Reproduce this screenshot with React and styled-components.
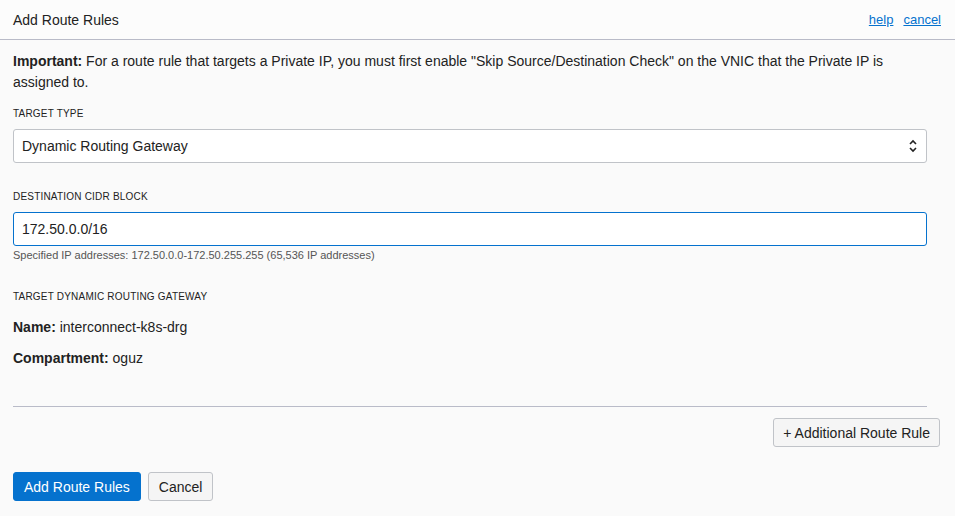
import styled, { createGlobalStyle } from "styled-components";

const GlobalStyle = createGlobalStyle`
  html, body {
    margin: 0;
    padding: 0;
    background: #fafafa;
  }
  body {
    font-family: "Liberation Sans", Arial, sans-serif;
    color: #161513;
  }
`;

const Panel = styled.div`
  width: 955px;
  height: 516px;
  display: flex;
  flex-direction: column;
  background: #fafafa;
`;

const Header = styled.div`
  height: 39px;
  display: flex;
  align-items: center;
  justify-content: space-between;
  padding: 0 14px 0 13px;
  border-bottom: 1px solid #b9bbc8;
  background: #fcfcfc;
`;

const Title = styled.h1`
  margin: 0;
  font-size: 14px;
  font-weight: 400;
  color: #222;
`;

const Links = styled.div`
  display: flex;
  gap: 10px;
`;

const Link = styled.a`
  font-size: 13px;
  color: #0572ce;
  text-decoration: underline;
  cursor: pointer;
`;

const Body = styled.div`
  padding: 11px 28px 0 13px;
  display: flex;
  flex-direction: column;
`;

const Notice = styled.p`
  margin: 0;
  font-size: 14px;
  line-height: 21px;
  color: #222;
  padding-right: 20px;
`;

const Label = styled.div`
  font-size: 10px;
  letter-spacing: 0.2px;
  text-transform: uppercase;
  color: #222;
  margin-top: ${(p) => p.$top}px;
  margin-bottom: ${(p) => p.$bottom}px;
`;

const Field = styled.div`
  height: 34px;
  box-sizing: border-box;
  border: 1px solid ${(p) => (p.$focus ? "#0572ce" : "#c0c3c8")};
  border-radius: 3px;
  background: #fff;
  display: flex;
  align-items: center;
  justify-content: space-between;
  padding: 0 8px 0 8px;
  font-size: 14px;
  color: #222;
`;

const Help = styled.div`
  font-size: 11px;
  color: #555;
  margin-top: 3px;
`;

const Detail = styled.div`
  font-size: 14px;
  color: #222;
  margin-top: ${(p) => p.$top}px;
  b {
    font-weight: 700;
  }
`;

const Divider = styled.hr`
  border: none;
  border-top: 1px solid #b9bbc8;
  margin: 40px 0 0 0;
`;

const RightRow = styled.div`
  display: flex;
  justify-content: flex-end;
  margin: 11px -13px 0 0;
`;

const Button = styled.button`
  font-family: "Liberation Sans", Arial, sans-serif;
  font-size: 14px;
  height: 29px;
  padding: 0 ${(p) => p.$px || 9}px;
  border-radius: 3px;
  cursor: pointer;
  border: 1px solid ${(p) => (p.$primary ? "#0572ce" : "#c0c3c8")};
  background: ${(p) => (p.$primary ? "#0572ce" : "#f5f5f5")};
  color: ${(p) => (p.$primary ? "#fff" : "#222")};
`;

const Footer = styled.div`
  display: flex;
  gap: 7px;
  margin-top: 25px;
`;

const Chevrons = () => (
  <svg width="10" height="14" viewBox="0 0 10 14" fill="none" stroke="#222" strokeWidth="1.6">
    <path d="M2 5 L5 2 L8 5" />
    <path d="M2 9 L5 12 L8 9" />
  </svg>
);

export default function App() {
  return (
    <Panel>
      <GlobalStyle />
      <Header>
        <Title>Add Route Rules</Title>
        <Links>
          <Link>help</Link>
          <Link>cancel</Link>
        </Links>
      </Header>
      <Body>
        <Notice>
          <b>Important:</b> For a route rule that targets a Private IP, you must first enable "Skip
          Source/Destination Check" on the VNIC that the Private IP is assigned to.
        </Notice>
        <Label $top={15} $bottom={10}>Target Type</Label>
        <Field>
          Dynamic Routing Gateway
          <Chevrons />
        </Field>
        <Label $top={28} $bottom={10}>Destination CIDR Block</Label>
        <Field $focus>172.50.0.0/16</Field>
        <Help>Specified IP addresses: 172.50.0.0-172.50.255.255 (65,536 IP addresses)</Help>
        <Label $top={30} $bottom={0}>Target Dynamic Routing Gateway</Label>
        <Detail $top={17}>
          <b>Name:</b> interconnect-k8s-drg
        </Detail>
        <Detail $top={15}>
          <b>Compartment:</b> oguz
        </Detail>
        <Divider />
        <RightRow>
          <Button>+ Additional Route Rule</Button>
        </RightRow>
        <Footer>
          <Button $primary $px={10}>Add Route Rules</Button>
          <Button $px={10}>Cancel</Button>
        </Footer>
      </Body>
    </Panel>
  );
}
